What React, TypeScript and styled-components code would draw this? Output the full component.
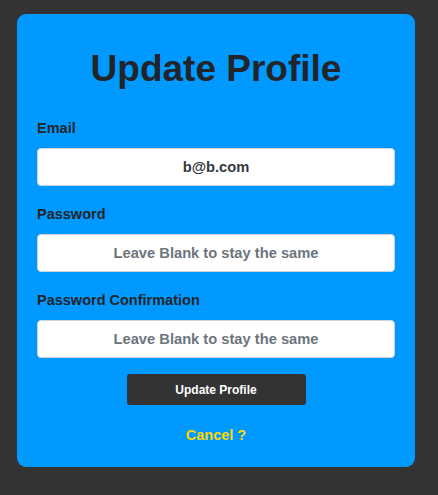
import React from "react";
import styled, { createGlobalStyle } from "styled-components";

const Global = createGlobalStyle`
  html, body { margin: 0; padding: 0; background: #333333; }
  body { font-family: "Liberation Sans", Arial, sans-serif; }
  * { box-sizing: border-box; }
`;

const Page = styled.div`
  padding: 14px 23px 29px 17px;
`;

const Card = styled.form`
  background: #0099ff;
  border-radius: 9px;
  padding: 33px 20px 23px 20px;
  display: flex;
  flex-direction: column;
`;

const Title = styled.h1`
  margin: 0 0 29px 0;
  text-align: center;
  font-size: 37px;
  line-height: 44px;
  font-weight: 700;
  color: #212529;
`;

const Field = styled.div`
  display: flex;
  flex-direction: column;
  margin-bottom: 20px;
  &:last-of-type { margin-bottom: 16px; }
`;

const Label = styled.label`
  font-size: 14.5px;
  line-height: 17px;
  font-weight: 700;
  color: #212529;
  margin-bottom: 11px;
`;

const Input = styled.input`
  height: 38px;
  width: 100%;
  border: 1px solid #ced4da;
  border-radius: 4px;
  background: #ffffff;
  text-align: center;
  font-family: "Liberation Sans", Arial, sans-serif;
  font-size: 14.7px;
  font-weight: 700;
  color: #343a40;
  outline: none;
  &::placeholder { color: #6c757d; opacity: 1; }
`;

const Submit = styled.button`
  align-self: center;
  width: 179px;
  height: 31px;
  border: none;
  border-radius: 3px;
  background: #333333;
  color: #ffffff;
  font-family: "Liberation Sans", Arial, sans-serif;
  font-size: 12px;
  font-weight: 700;
  margin-bottom: 22px;
`;

const Cancel = styled.a`
  align-self: center;
  color: #ffd700;
  font-size: 14.5px;
  line-height: 17px;
  font-weight: 700;
  text-decoration: none;
`;

export default function App() {
  return (
    <>
      <Global />
      <Page>
        <Card onSubmit={(e) => e.preventDefault()}>
          <Title>Update Profile</Title>
          <Field>
            <Label>Email</Label>
            <Input type="email" defaultValue="b@b.com" />
          </Field>
          <Field>
            <Label>Password</Label>
            <Input type="password" placeholder="Leave Blank to stay the same" />
          </Field>
          <Field>
            <Label>Password Confirmation</Label>
            <Input type="password" placeholder="Leave Blank to stay the same" />
          </Field>
          <Submit type="submit">Update Profile</Submit>
          <Cancel href="#">Cancel ?</Cancel>
        </Card>
      </Page>
    </>
  );
}
